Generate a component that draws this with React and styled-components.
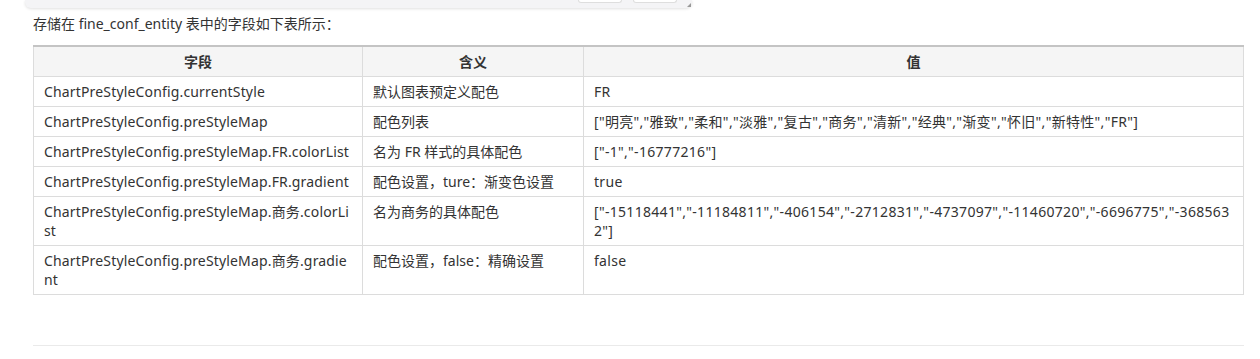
import React from 'react'
import styled, { createGlobalStyle } from 'styled-components';

const GlobalStyle = createGlobalStyle`
  body {
    margin: 0;
    background: #fff;
    font-family: "Noto Sans", "Noto Sans CJK SC", sans-serif;
    color: #333;
  }
`

const rows = [
  ['ChartPreStyleConfig.currentStyle', '默认图表预定义配色', 'FR'],
  ['ChartPreStyleConfig.preStyleMap', '配色列表', '["明亮","雅致","柔和","淡雅","复古","商务","清新","经典","渐变","怀旧","新特性","FR"]'],
  ['ChartPreStyleConfig.preStyleMap.FR.colorList', '名为 FR 样式的具体配色', '["-1","-16777216"]'],
  ['ChartPreStyleConfig.preStyleMap.FR.gradient', '配色设置，ture：渐变色设置', 'true'],
  ['ChartPreStyleConfig.preStyleMap.商务.colorList', '名为商务的具体配色', '["-15118441","-11184811","-406154","-2712831","-4737097","-11460720","-6696775","-3685632"]'],
  ['ChartPreStyleConfig.preStyleMap.商务.gradient', '配色设置，false：精确设置', 'false'],
]

// per-column letter spacing, so the wraps fall where the original font put them
const tracking = ['0.16px', '0', '0.3px']

function App() {
  return (
    <Page>
      <GlobalStyle />
      <CodePanel>
        <PanelButton />
        <PanelButton />
        <Grip />
      </CodePanel>
      <Intro>存储在 fine_conf_entity 表中的字段如下表所示：</Intro>
      <Table>
        <colgroup>
          <col style={{ width: 329 }} />
          <col style={{ width: 221 }} />
          <col />
        </colgroup>
        <thead>
          <tr>
            <Th>字段</Th>
            <Th>含义</Th>
            <Th>值</Th>
          </tr>
        </thead>
        <tbody>
          {rows.map((r) => (
            <tr key={r[0]}>
              {r.map((cell, i) => (
                <Td key={i} $tracking={tracking[i]}>{cell}</Td>
              ))}
            </tr>
          ))}
        </tbody>
      </Table>
      <Rule />
    </Page>
  )
}

export default App;


const Page = styled.div`
  padding: 0 16px 0 33px;
  height: 359px;
  overflow: hidden;
  box-sizing: border-box;
`

const CodePanel = styled.div`
  position: relative;
  margin-left: -8px;
  width: 667px;
  height: 8px;
  background: #f4f4f6;
  border-radius: 0 0 6px 6px;
  box-shadow: 0 1px 3px rgba(0, 0, 0, 0.12);
  display: flex;
  justify-content: flex-end;
  align-items: flex-end;
  gap: 11px;
  padding: 0 15px 5px 0;
  box-sizing: border-box;
`

const PanelButton = styled.div`
  width: 42px;
  height: 4px;
  background: #fff;
  border: 1px solid #dedede;
  border-top: none;
  border-radius: 0 0 3px 3px;
`

const Grip = styled.div`
  position: absolute;
  right: 1px;
  bottom: 1px;
  width: 0;
  height: 0;
  border-left: 4px solid transparent;
  border-bottom: 4px solid #999;
`

const Intro = styled.p`
  margin: 6px 0 0;
  font-size: 14px;
  line-height: 20px;
  color: #333;
`

const Table = styled.table`
  margin-top: 11px;
  width: 100%;
  border-collapse: collapse;
  table-layout: fixed;
  border-top: 2px solid #c4c4c4;
  font-size: 14px;
  color: #333;
`

const Th = styled.th`
  background: #f5f5f5;
  font-weight: bold;
  text-align: center;
  padding: 5px 10px;
  line-height: 19px;
  border: 1px solid #dcdcdc;
  border-top: none;
`

const Td = styled.td`
  padding: 5px 10px;
  line-height: 19px;
  letter-spacing: ${(p) => p.$tracking};
  border: 1px solid #dcdcdc;
  vertical-align: top;
  word-break: break-all;
`

const Rule = styled.div`
  margin-top: 50px;
  height: 1px;
  background: #eaeaea;
`
